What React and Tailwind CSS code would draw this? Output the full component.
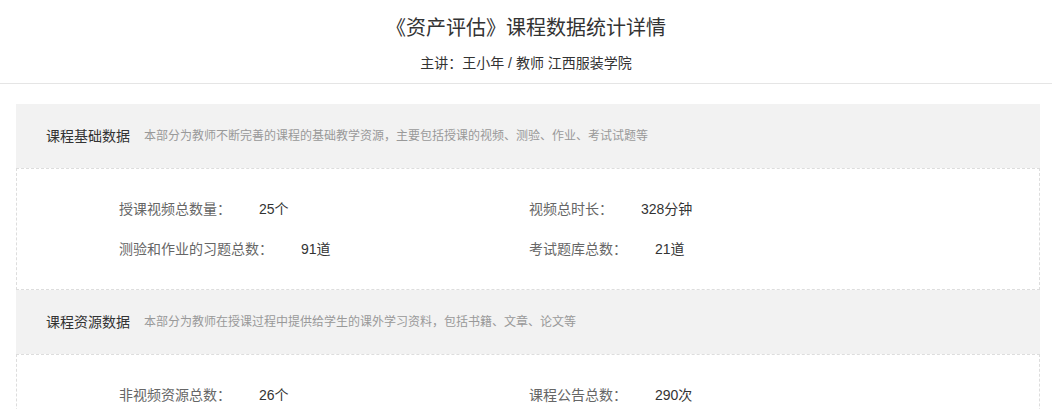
const FONT = { fontFamily: '"Liberation Sans", "Noto Sans CJK SC", sans-serif' }

const SECTIONS = [
  {
    title: '课程基础数据',
    desc: '本部分为教师不断完善的课程的基础教学资源，主要包括授课的视频、测验、作业、考试试题等',
    items: [
      ['授课视频总数量：', '25个'],
      ['视频总时长：', '328分钟'],
      ['测验和作业的习题总数：', '91道'],
      ['考试题库总数：', '21道'],
    ],
  },
  {
    title: '课程资源数据',
    desc: '本部分为教师在授课过程中提供给学生的课外学习资料，包括书籍、文章、论文等',
    items: [
      ['非视频资源总数：', '26个'],
      ['课程公告总数：', '290次'],
    ],
  },
]

function Section({ title, desc, items }) {
  return (
    <div>
      <div className="h-[64px] bg-[#f2f2f2] flex items-center px-[30px]">
        <span className="text-[14px] text-[#333]">{title}</span>
        <span className="text-[12px] text-[#999] ml-[14px]">{desc}</span>
      </div>
      <div className="border border-dashed border-[#dddddd] bg-white py-[20px] pl-[102px] grid grid-cols-[410px_1fr]">
        {items.map(([label, value]) => (
          <div key={label} className="flex leading-[40px] text-[14px]">
            <span className="text-[#666]">{label}</span>
            <span className="text-[#333] ml-[28px]">{value}</span>
          </div>
        ))}
      </div>
    </div>
  )
}

export default function App() {
  return (
    <div className="min-h-screen bg-white" style={FONT}>
      <div className="border-b border-[#e5e5e5] pt-[14px] pb-[10px] text-center">
        <h1 className="text-[20px] leading-[28px] text-[#333]">《资产评估》课程数据统计详情</h1>
        <p className="mt-[11px] text-[14px] leading-[20px] text-[#333]">主讲：王小年 / 教师 江西服装学院</p>
      </div>
      <div className="mx-[16px] mt-[20px] w-[1024px]">
        {SECTIONS.map(s => <Section key={s.title} {...s} />)}
      </div>
    </div>
  )
}
